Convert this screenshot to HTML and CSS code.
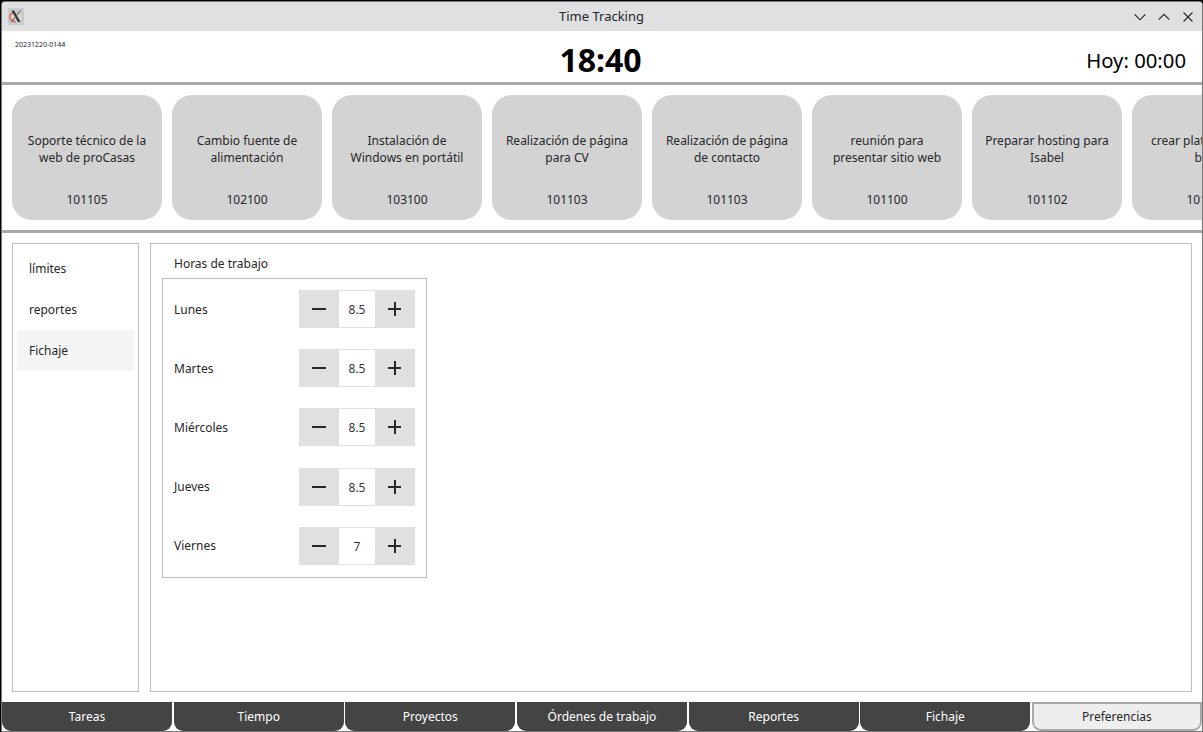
FILE: index.html
```
<!DOCTYPE html>
<html lang="es">
<head>
<meta charset="utf-8">
<title>Time Tracking</title>
<link rel="stylesheet" href="styles.css">
</head>
<body>
<div class="window">
  <header class="titlebar">
    <svg class="app-icon" width="16" height="17" viewBox="0 0 16 17">
      <rect width="16" height="17" fill="#c5cdd0"/>
      <ellipse cx="8" cy="9" rx="6.5" ry="4.5" fill="#d5d5ce" stroke="#d4ccbd"/>
      <path d="M5 4.800C.8 6.500 .8 11.500 5 13M5 13.300l3 .6" fill="none" stroke="#e2694a" stroke-width="1.500"/>
      <path d="M3.500 2.500h2.500l6.500 11.500H10z" fill="#303335"/>
      <path d="M12.500 2.500L3.500 14" stroke="#4a4d4f" stroke-width="1"/>
    </svg>
    <span class="window-title">Time Tracking</span>
    <div class="window-controls">
      <svg width="12" height="12" viewBox="0 0 12 12"><path d="M.7 3.500L6 8.800l5.300-5.300"/></svg>
      <svg width="12" height="12" viewBox="0 0 12 12"><path d="M.7 8.700L6 3.400l5.300 5.300"/></svg>
      <svg width="12" height="12" viewBox="0 0 12 12"><path d="M1.500 1.500l9 9M10.500 1.500l-9 9"/></svg>
    </div>
  </header>
  <section class="status">
    <span class="version">20231220-0144</span>
    <span class="clock">18:40</span>
    <span class="today">Hoy: 00:00</span>
  </section>
  <section class="tasks">
    <article class="task"><p>Soporte técnico de la<br>web de proCasas</p><span>101105</span></article>
    <article class="task"><p>Cambio fuente de<br>alimentación</p><span>102100</span></article>
    <article class="task"><p>Instalación de<br>Windows en portátil</p><span>103100</span></article>
    <article class="task"><p>Realización de página<br>para CV</p><span>101103</span></article>
    <article class="task"><p>Realización de página<br>de contacto</p><span>101103</span></article>
    <article class="task"><p>reunión para<br>presentar sitio web</p><span>101100</span></article>
    <article class="task"><p>Preparar hosting para<br>Isabel</p><span>101102</span></article>
    <article class="task"><p>crear plataforma de<br>blog</p><span>101101</span></article>
  </section>
  <main class="preferences">
    <nav class="sections">
      <a class="section">límites</a>
      <a class="section">reportes</a>
      <a class="section section-active">Fichaje</a>
    </nav>
    <section class="detail">
      <h2 class="group-title">Horas de trabajo</h2>
      <div class="group">
        <div class="day"><span class="day-name">Lunes</span><div class="spin"><button class="minus"></button><span class="value">8.5</span><button class="plus"></button></div></div>
        <div class="day"><span class="day-name">Martes</span><div class="spin"><button class="minus"></button><span class="value">8.5</span><button class="plus"></button></div></div>
        <div class="day"><span class="day-name">Miércoles</span><div class="spin"><button class="minus"></button><span class="value">8.5</span><button class="plus"></button></div></div>
        <div class="day"><span class="day-name">Jueves</span><div class="spin"><button class="minus"></button><span class="value">8.5</span><button class="plus"></button></div></div>
        <div class="day"><span class="day-name">Viernes</span><div class="spin"><button class="minus"></button><span class="value">7</span><button class="plus"></button></div></div>
      </div>
    </section>
  </main>
  <nav class="tabs">
    <a class="tab">Tareas</a>
    <a class="tab">Tiempo</a>
    <a class="tab">Proyectos</a>
    <a class="tab">Órdenes de trabajo</a>
    <a class="tab">Reportes</a>
    <a class="tab">Fichaje</a>
    <a class="tab tab-active">Preferencias</a>
  </nav>
</div>
</body>
</html>
```
FILE: styles.css
```
* { box-sizing: border-box; }
body {
  margin: 0;
  height: 732px;
  padding: 1px 0 0 1px;
  overflow: hidden;
  background: #000;
  color: #26282a;
  font: 12px/17px "Noto Sans", sans-serif;
}
.window {
  display: flex;
  flex-direction: column;
  width: 1202px;
  height: 731px;
  overflow: hidden;
  border: 1px solid #77787a;
  border-radius: 4px 4px 0 0;
  background: #fff;
}
.titlebar {
  display: grid;
  grid-template-columns: 1fr auto 1fr;
  align-items: center;
  flex: none;
  height: 29px;
  padding: 0 8px 0 6px;
  background: #dfe0e2;
}
.window-title { padding-left: 1px; font-size: 13px; color: #232629; }
.window-controls { display: flex; justify-content: flex-end; gap: 12px; }
.window-controls svg { fill: none; stroke: #232629; stroke-width: 1.1; }
.status {
  display: grid;
  grid-template-columns: 1fr auto 1fr;
  flex: none;
  align-items: center;
  height: 54px;
  padding: 5px 16px 0 13px;
  border-bottom: 3px solid #a9a9a9;
  color: #000;
}
.version { align-self: start; margin-top: 1px; font-size: 7px; line-height: 16px; color: #26282a; }
.clock { font-size: 32px; font-weight: 700; line-height: 45px; }
.today { justify-self: end; padding-top: 1px; font-size: 20.3px; line-height: 28px; }
.tasks {
  display: flex;
  flex: none;
  gap: 10px;
  height: 148px;
  padding: 10px;
  overflow: hidden;
  border-bottom: 3px solid #a9a9a9;
}
.task {
  display: flex;
  flex: none;
  flex-direction: column;
  align-items: center;
  justify-content: space-between;
  width: 150px;
  height: 125px;
  padding: 37px 0 12px;
  border-radius: 20px;
  background: #d3d3d3;
  text-align: center;
  white-space: nowrap;
}
.task p { margin: 0; }
.preferences {
  display: flex;
  flex: 1;
  min-height: 0;
  gap: 11px;
  padding: 10px;
}
.sections {
  width: 127px;
  padding: 4px;
  border: 1px solid #bdbdbd;
}
.section { display: block; height: 41px; padding: 12px; }
.section-active { background: #f5f5f5; }
.detail {
  flex: 1;
  padding: 11px;
  border: 1px solid #bdbdbd;
}
.group-title { margin: 0 0 6px 12px; font-size: 12px; font-weight: 400; line-height: 17px; }
.group {
  display: flex;
  flex-direction: column;
  justify-content: space-between;
  width: 265px;
  height: 300px;
  padding: 11px 11px 12.2px;
  border: 1px solid #bdbdbd;
}
.day { display: flex; align-items: center; justify-content: space-between; }
.spin { display: flex; width: 116px; height: 38px; background: #e0e0e0; }
.value {
  width: 36px;
  margin: 1px 0;
  background: #fff;
  color: #353637;
  line-height: 37px;
  text-align: center;
}
.minus, .plus { width: 40px; border: 0; padding: 0; }
.minus { background: linear-gradient(#26282a, #26282a) 13px 18px / 14px 2px no-repeat; }
.plus {
  background:
    linear-gradient(#26282a, #26282a) 13px 18px / 13px 2px no-repeat,
    linear-gradient(#26282a, #26282a) 19px 12px / 2px 14px no-repeat;
}
.tabs {
  display: grid;
  grid-template-columns: repeat(7, 1fr);
  flex: none;
  gap: 1.5px;
  height: 29px;
}
.tab {
  border-radius: 0 0 9px 9px;
  background: #444;
  color: #fff;
  line-height: 29px;
  text-align: center;
}
.tab-active {
  border: 2px solid #a9a9a9;
  background: #eee;
  color: #26282a;
  line-height: 25px;
}
```
